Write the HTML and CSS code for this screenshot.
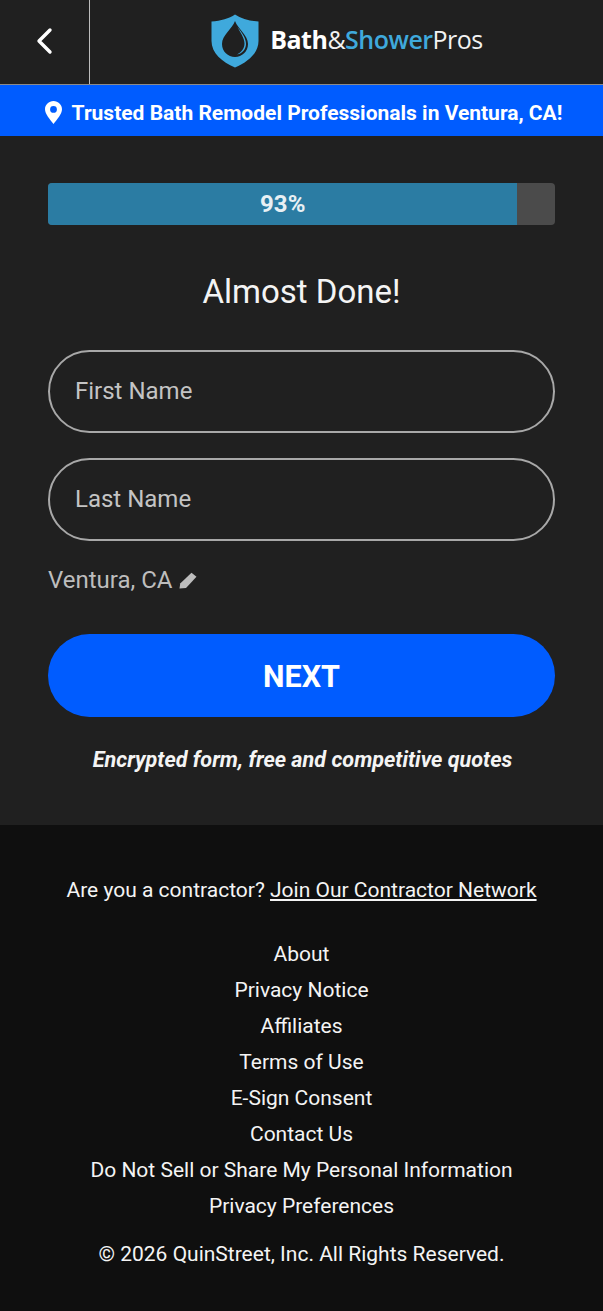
FILE: index.html
```html
<!DOCTYPE html>
<html>
<head>
	<meta name="viewport" content="width=device-width, initial-scale=1.0, maximum-scale=1">
	<link rel="stylesheet" href="styles.css">
	<title>Bath&amp;ShowerPros</title>
</head>
<body>
	<div class="header">
		<a class="back">
			<svg width="18" height="28" viewBox="0 0 18 28"><path d="M15 3 L4 14 L15 25" fill="none" stroke="#fff" stroke-width="3.4" stroke-linecap="round" stroke-linejoin="round"/></svg>
		</a>
		<div class="logo">
			<svg class="shield" width="48" height="54" viewBox="0 0 48 54">
				<path d="M24 0.5 C30 4.500 38 7 47.500 7.500 L47.500 27 C47.500 39 37 48 24 53.500 C11 48 0.500 39 0.500 27 L0.500 7.500 C10 7 18 4.500 24 0.500 Z" fill="#3fa9dc"/>
				<path d="M24 7 C27 15 37 21 37 30 C37 37.500 31 43 24 43 C17 43 11 37.500 11 30 C11 21 21 15 24 7 Z" fill="#202020"/>
				<path d="M26.500 13 C31 19 35 24 35 30 C35 35 31.500 39.500 26 40.500 C30.500 38 33.500 34.500 33.500 29.500 C33.500 24 29 18 26.500 13 Z" fill="#3fa9dc"/>
			</svg>
			<span class="logo-text"><b>Bath</b>&amp;<b class="blue">Shower</b>Pros</span>
		</div>
	</div>
	<div class="banner">
		<svg width="17" height="23" viewBox="0 0 17 23"><path fill-rule="evenodd" d="M8.500 0 C13.200 0 17 3.700 17 8.300 C17 13 12 18.500 8.500 23 C5 18.500 0 13 0 8.300 C0 3.700 3.800 0 8.500 0 Z M8.500 5 A3.400 3.400 0 1 0 8.500 11.800 A3.400 3.400 0 1 0 8.500 5 Z" fill="#fff"/></svg>
		<span>Trusted Bath Remodel Professionals in Ventura, CA!</span>
	</div>
	<div class="main">
		<div class="progress">
			<div class="progress-fill" style="width: 92.6%">93%</div>
		</div>
		<h1 class="title">Almost Done!</h1>
		<div class="field">First Name</div>
		<div class="field">Last Name</div>
		<div class="location">
			<span>Ventura, CA</span>
			<svg width="18" height="17" viewBox="0 0 18 17"><path d="M12.500 0.800 L17.500 4.800 L7 16 L0.500 16.500 L1.200 11.500 Z" fill="#bdbdbd"/></svg>
		</div>
		<div class="next">NEXT</div>
		<p class="secure">Encrypted form, free and competitive quotes</p>
	</div>
	<div class="footer">
		<p class="join">Are you a contractor? <a>Join Our Contractor Network</a></p>
		<ul class="links">
			<li>About</li>
			<li>Privacy Notice</li>
			<li>Affiliates</li>
			<li>Terms of Use</li>
			<li>E-Sign Consent</li>
			<li>Contact Us</li>
			<li>Do Not Sell or Share My Personal Information</li>
			<li>Privacy Preferences</li>
		</ul>
		<p class="copy">© 2026 QuinStreet, Inc. All Rights Reserved.</p>
	</div>
</body>
</html>
```

FILE: styles.css
```css
* {
	box-sizing: border-box;
}

body {
	margin: 0;
	background-color: #0f0f0f;
	color: white;
	font-family: Roboto, "Liberation Sans", sans-serif;
}

.header {
	display: flex;
	height: 85px;
	background-color: #202020;
	border-bottom: 1px solid #8a8a8a;
}

.back {
	display: flex;
	align-items: center;
	justify-content: center;
	width: 90px;
	padding-right: 2px;
	padding-bottom: 3px;
	border-right: 1px solid #bdbdbd;
}

.logo {
	flex: 1;
	display: flex;
	align-items: center;
	justify-content: center;
	gap: 11px;
	padding-bottom: 3px;
	padding-left: 1px;
}

.shield {
	margin-top: 1px;
}

.logo-text {
	font-family: "Open Sans", sans-serif;
	font-size: 25px;
	letter-spacing: -0.5px;
	color: #f2f2f2;
	margin-top: -3px;
}

.logo-text b {
	font-weight: 700;
	color: white;
}

.logo-text .blue {
	font-weight: 600;
	color: #3fa9dc;
}

.banner {
	display: flex;
	align-items: center;
	justify-content: center;
	gap: 10px;
	height: 51px;
	padding-top: 4px;
	padding-left: 4px;
	background-color: #005cff;
	font-size: 21px;
	font-weight: 700;
}

.main {
	height: 689px;
	padding: 47px 48px 0;
	background-color: #202020;
}

.progress {
	height: 42px;
	background-color: #4b4b4b;
	border-radius: 4px;
	overflow: hidden;
}

.progress-fill {
	height: 42px;
	line-height: 42px;
	text-align: center;
	font-size: 24px;
	font-weight: 700;
	color: #e8f0f4;
	background-color: #2b7ca3;
}

.title {
	margin: 46px 0 38px;
	height: 41px;
	line-height: 41px;
	text-align: center;
	font-size: 33px;
	font-weight: 400;
	color: #f4f4f4;
}

.field {
	height: 83px;
	line-height: 79px;
	margin-bottom: 25px;
	padding-left: 25px;
	border: 2px solid #a8a8a8;
	border-radius: 42px;
	font-size: 24px;
	color: #c4c4c4;
}

.location {
	display: flex;
	align-items: center;
	gap: 6px;
	height: 28px;
	font-size: 24px;
	color: #bdbdbd;
}

.next {
	height: 83px;
	line-height: 85px;
	margin-top: 40px;
	background-color: #005cff;
	border-radius: 42px;
	text-align: center;
	font-size: 30.5px;
	font-weight: 700;
}

.secure {
	margin: 30px 0 0;
	padding-left: 2px;
	text-align: center;
	font-size: 21.6px;
	line-height: 26px;
	font-weight: 700;
	font-style: italic;
	color: #f4f4f4;
}

.footer {
	height: 486px;
	padding-top: 51px;
	text-align: center;
	font-size: 21px;
	color: #f4f4f4;
}

.join {
	margin: 0 0 32px;
	line-height: 28px;
}

.join a {
	text-decoration: underline;
}

.links {
	margin: 0;
	padding: 0;
	list-style: none;
}

.links li {
	height: 36px;
	line-height: 36px;
}

.copy {
	margin: 16px 0 0;
	line-height: 28px;
}
```
